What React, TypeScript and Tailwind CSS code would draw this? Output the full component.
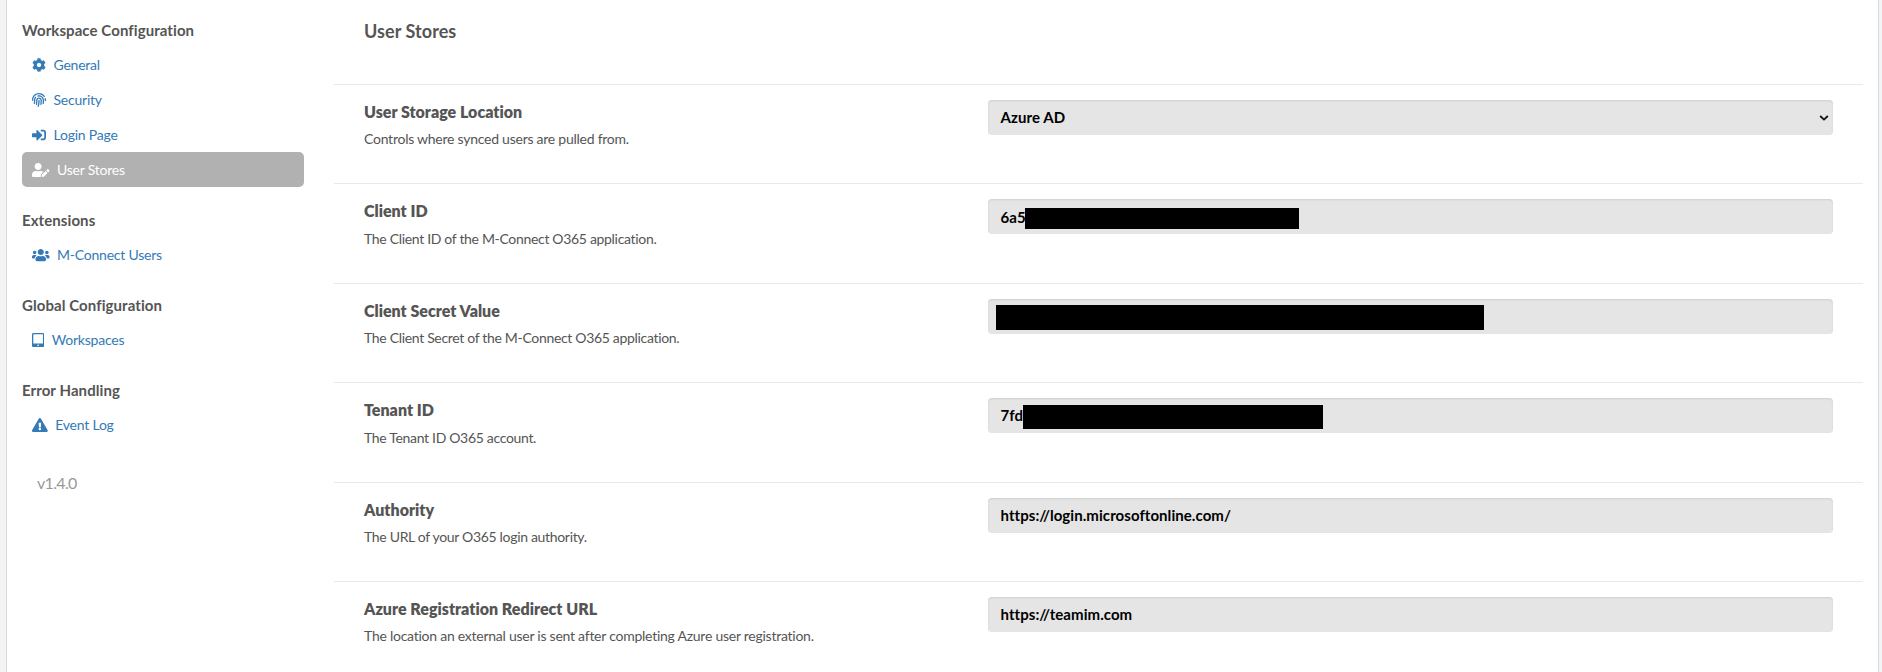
import { FaCog, FaExclamationTriangle, FaFingerprint, FaSignInAlt, FaTabletAlt, FaUserEdit, FaUsers } from "react-icons/fa";

const navGroups = [
  {
    title: "Workspace Configuration",
    items: [
      { label: "General", icon: FaCog, size: "w-3.5" },
      { label: "Security", icon: FaFingerprint, size: "w-3.5" },
      { label: "Login Page", icon: FaSignInAlt, size: "w-3.5" },
      { label: "User Stores", icon: FaUserEdit, size: "w-[17.5px]", active: true },
    ],
  },
  { title: "Extensions", items: [{ label: "M-Connect Users", icon: FaUsers, size: "w-[17.5px]" }] },
  { title: "Global Configuration", items: [{ label: "Workspaces", icon: FaTabletAlt, size: "w-[12.25px]" }] },
  { title: "Error Handling", items: [{ label: "Event Log", icon: FaExclamationTriangle, size: "w-[15.75px]" }] },
];

const settings = [
  { title: "User Storage Location", text: "Controls where synced users are pulled from.", value: "Azure AD", select: true },
  { title: "Client ID", text: "The Client ID of the M-Connect O365 application.", value: "6a5", mask: "left-[37px] top-[9px] w-[274px] h-[21px]", tight: true },
  { title: "Client Secret Value", text: "The Client Secret of the M-Connect O365 application.", value: "", mask: "left-2 top-1.5 w-[488px] h-[25px]", tight: true },
  { title: "Tenant ID", text: "The Tenant ID O365 account.", value: "7fd", mask: "left-[35px] top-[7px] w-[300px] h-6", tight: true },
  { title: "Authority", text: "The URL of your O365 login authority.", value: "https://login.microsoftonline.com/", tight: true },
  { title: "Azure Registration Redirect URL", text: "The location an external user is sent after completing Azure user registration.", value: "https://teamim.com" },
];

const Sidebar = () => (
  <nav className="w-[282px] shrink-0 pt-3.5">
    {navGroups.map((group) => (
      <div key={group.title} className="mb-[17px]">
        <h4 className="mb-px h-8 text-[15px] leading-8 font-bold tracking-[0.08px]">{group.title}</h4>
        {group.items.map((item) => (
          <a
            key={item.label}
            className={
              "flex h-[35px] items-center rounded-[5px] pl-2.5 text-sm tracking-[-0.22px] " +
              (item.active ? "bg-[#b1b1b1] text-white" : "text-[#337ab7]")
            }
          >
            <item.icon className={"mr-[7.5px] h-3.5 shrink-0 " + item.size} />
            {item.label}
          </a>
        ))}
      </div>
    ))}
    <p className="mt-[29px] pl-[15px] text-base tracking-[-0.65px] text-[#999]">v1.4.0</p>
  </nav>
);

export default function App() {
  return (
    <div className="h-[672px] overflow-hidden bg-[#f3f4f5] pr-[3px] pl-1.5 font-['Lato',sans-serif] text-[#555]">
      <div className="flex h-full border-x border-[#d9d9d9] bg-white px-[15px]">
        <Sidebar />
        <main className="ml-[30px] flex-1">
          <h2 className="h-[84px] pt-[17px] pl-[30px] text-lg font-bold tracking-[0.06px]">User Stores</h2>
          {settings.map((row) => (
            <section key={row.title} className="flex h-[99.4px] border-t border-[#e9e9e9] px-[30px]">
              <div className="w-[624px] shrink-0 pt-[15px]">
                <h3 className="text-base leading-6 font-extrabold tracking-[0.01px]">{row.title}</h3>
                <p className={"mt-[3.4px] text-sm leading-6 " + (row.tight ? "tracking-[-0.32px]" : "tracking-[-0.25px]")}>
                  {row.text}
                </p>
              </div>
              <div className="relative mt-[15px] flex h-[35px] flex-1 items-center justify-between rounded bg-[#e5e5e5] pr-3 pl-[12.5px] text-[15px] font-bold tracking-[0.06px] text-black shadow-[inset_0_1px_2px_rgba(0,0,0,0.1)]">
                {row.value}
                {row.mask && <span className={"absolute bg-black " + row.mask} />}
                {row.select && (
                  <svg className="-mr-2 h-2 w-2.5" viewBox="0 0 10 8" fill="none" stroke="#111" strokeWidth="1.8">
                    <path d="M1.2 2l3.8 3.6L8.8 2" />
                  </svg>
                )}
              </div>
            </section>
          ))}
        </main>
      </div>
    </div>
  );
}
